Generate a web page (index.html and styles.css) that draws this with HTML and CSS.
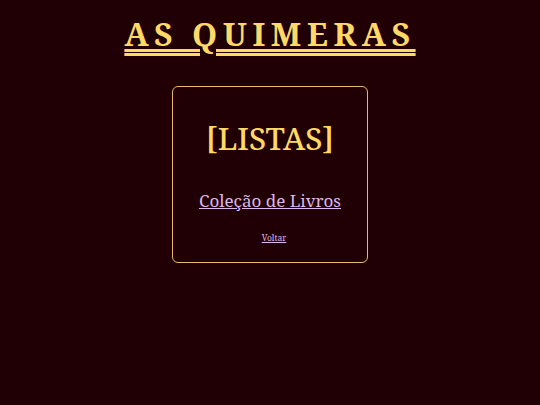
FILE: index.html
```html
<!DOCTYPE html>
<html lang="pt">
<head>
<meta charset="utf-8">
<title>As Quimeras</title>
<link rel="stylesheet" href="styles.css">
</head>
<body>
<header class="top">
  <h1 class="title">AS QUIMERAS</h1>
</header>
<main class="wrap">
  <section class="card">
    <h2 class="card-title">[LISTAS]</h2>
    <a class="list-link" href="#">Coleção de Livros</a>
    <a class="back" href="#">Voltar</a>
  </section>
</main>
</body>
</html>
```
FILE: styles.css
```css
html, body {
  margin: 0;
  padding: 0;
  background: #200004;
  height: 100%;
}
body {
  font-family: "Noto Serif", "Liberation Serif", serif;
  color: #ffd966;
}
.top {
  display: flex;
  justify-content: center;
  padding-top: 14px;
}
.title {
  margin: 0;
  font-size: 32px;
  line-height: 40px;
  font-weight: bold;
  letter-spacing: 5.6px;
  color: #ffd966;
  text-decoration: underline double;
  text-decoration-thickness: 2.5px;
  text-underline-offset: 3px;
}
.wrap {
  display: flex;
  justify-content: center;
  padding-top: 32px;
}
.card {
  width: 194px;
  height: 175px;
  border: 1.5px solid #e8b870;
  border-radius: 6px;
  display: flex;
  flex-direction: column;
  align-items: center;
}
.card-title {
  margin: 30px 0 0;
  font-size: 31px;
  font-weight: 500;
  color: #ffd966;
}
.list-link {
  margin-top: 30px;
  font-size: 17px;
  color: #dcb8ec;
}
.back {
  margin-top: 20px;
  margin-left: 8px;
  font-size: 8.5px;
  color: #dcb8ec;
}
```
